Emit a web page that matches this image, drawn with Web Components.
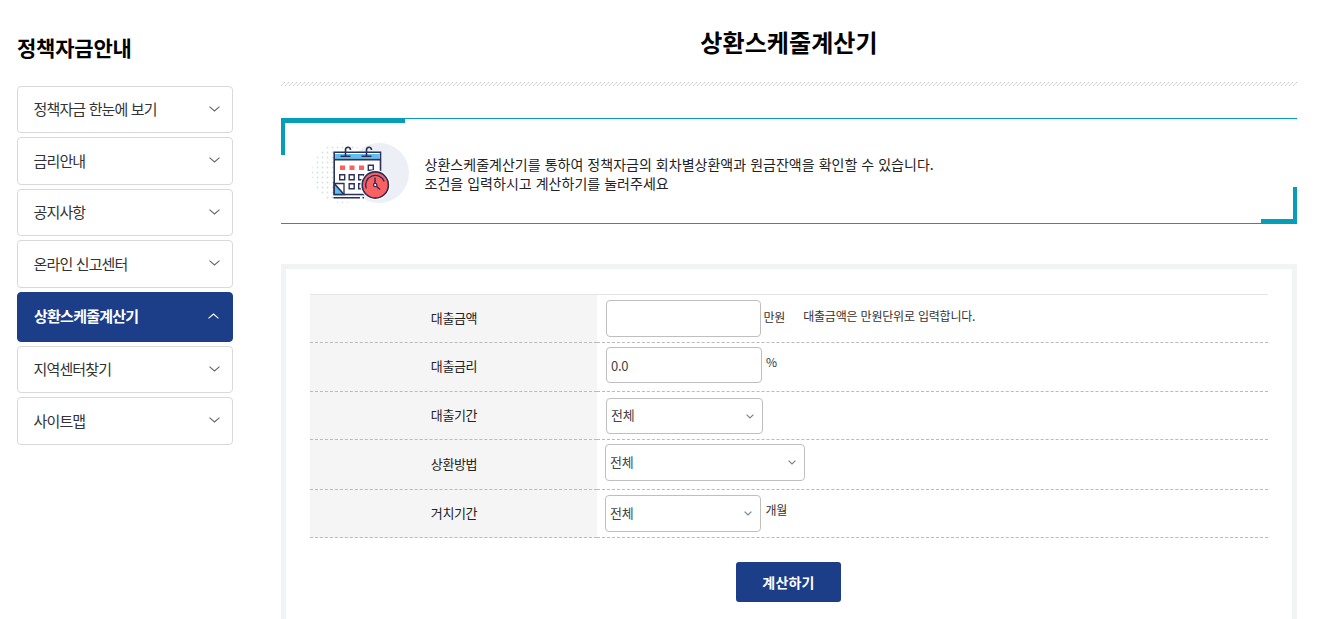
<!DOCTYPE html>
<html lang="ko">
<head>
<meta charset="utf-8">
<title>상환스케줄계산기</title>
<style>
    html, body { margin:0; height:619px; overflow:hidden; background:#fff }
    body { font-family:"Noto Sans CJK KR", sans-serif; color:#222 }
</style>
</head>
<body>
<loan-page>
    <side-menu slot="side" heading="정책자금안내">
        <side-item>정책자금 한눈에 보기</side-item>
        <side-item style="--h:48px">금리안내</side-item>
        <side-item>공지사항</side-item>
        <side-item style="--h:48px">온라인 신고센터</side-item>
        <side-item active style="--h:50px">상환스케줄계산기</side-item>
        <side-item>지역센터찾기</side-item>
        <side-item style="--h:48px">사이트맵</side-item>
    </side-menu>
    <page-title>상환스케줄계산기</page-title>
    <info-box>
        <calendar-icon slot="icon"></calendar-icon>
        <div>상환스케줄계산기를 통하여 정책자금의 회차별상환액과 원금잔액을 확인할 수 있습니다.</div>
        <div>조건을 입력하시고 계산하기를 눌러주세요</div>
    </info-box>
    <loan-form>
        <form-row label="대출금액" style="--h:48px; --pad:5px 0 0 9px">
            <form-field style="--w:155px; --fh:37px"></form-field>
            <form-note style="--m:8px 0 0 2.5px">만원</form-note>
            <form-note style="--m:7px 0 0 18px">대출금액은 만원단위로 입력합니다.</form-note>
        </form-row>
        <form-row label="대출금리" style="--h:49px; --pad:4px 0 0 9px">
            <form-field style="--w:156px; --fh:36px">0.0</form-field>
            <form-note style="--m:6px 0 0 4px">%</form-note>
        </form-row>
        <form-row label="대출기간" style="--h:48px; --pad:6px 0 0 9px">
            <form-field select style="--w:157px; --fh:36px">전체</form-field>
        </form-row>
        <form-row label="상환방법" style="--h:50px; --pad:4px 0 0 8px">
            <form-field select style="--w:200px; --fh:37px">전체</form-field>
        </form-row>
        <form-row label="거치기간" style="--h:48px; --pad:5px 0 0 8px">
            <form-field select style="--w:156px; --fh:37px">전체</form-field>
            <form-note style="--m:6px 0 0 4.5px">개월</form-note>
        </form-row>
        <submit-button slot="action">계산하기</submit-button>
    </loan-form>
</loan-page>
<script>
const define = (tag, html) => customElements.define(tag, class extends HTMLElement {
    constructor() {
        super();
        this.attachShadow({ mode: 'open' }).innerHTML = typeof html == 'function' ? html(this) : html;
    }
});

define('loan-page', `
    <style>
        :host{
            display:grid; grid-template-columns:216px 1016px; column-gap:48px;
            box-sizing:border-box; height:619px; padding-left:17px;
        }
        main{ display:flex; flex-direction:column }
    </style>
    <slot name="side"></slot>
    <main><slot></slot></main>`);

define('side-menu', el => `
    <style>
        :host{ display:block; padding-top:32px }
        h2{
            margin:0 0 24px; height:30px; line-height:30px;
            font-size:21px; font-weight:700; letter-spacing:-.2px; color:#000;
        }
        nav{ display:flex; flex-direction:column; gap:4px }
    </style>
    <h2>${el.getAttribute('heading')}</h2>
    <nav><slot></slot></nav>`);

define('side-item', `
    <style>
        :host{
            display:flex; align-items:center; justify-content:space-between;
            box-sizing:border-box; height:var(--h, 47px); padding:0 12px 2px 15.5px;
            border:1px solid #d9d9d9; border-radius:4px;
            font-size:15px; letter-spacing:-.85px; color:#333; cursor:pointer;
        }
        :host([active]){
            padding:0 13px 3px 16px; background:#1c3d87; border-color:#1c3d87;
            color:#fff; font-weight:700; letter-spacing:-.75px;
        }
        svg{ fill:none; stroke:#666; stroke-width:1.1 }
        :host([active]) svg{ stroke:#fff; transform:rotate(180deg) }
    </style>
    <span><slot></slot></span>
    <svg width="11" height="6" viewBox="0 0 11 6"><path d="M.5 .7 5.5 5 10.5 .7"/></svg>`);

define('page-title', `
    <style>
        :host{ display:block; padding-top:24px }
        h1{
            margin:0 0 22px; height:36px; line-height:36px; text-align:center;
            font-size:24px; font-weight:700; letter-spacing:.1px; color:#000;
        }
        svg{ display:block }
    </style>
    <h1><slot></slot></h1>
    <svg width="1016" height="4" shape-rendering="crispEdges">
        <pattern id="hatch" width="4" height="4" patternUnits="userSpaceOnUse">
            <path fill="#c8c8c8" d="M3 0h1v1h-1zM0 3h1v1h-1z"/>
            <path fill="#dcdcdc" d="M2 1h1v1h-1zM1 2h1v1h-1z"/>
        </pattern>
        <rect width="1016" height="4" fill="url(#hatch)"/>
    </svg>`);

define('info-box', `
    <style>
        :host{
            display:flex; position:relative; box-sizing:border-box; height:106px; margin-top:32px;
            padding:21px 0 0 29px; gap:14.5px;
            border:solid #069db8; border-width:1px 0;
        }
        .text{ padding-top:15px; font-size:14px; line-height:19px; letter-spacing:.03px; color:#222 }
        /* thick corner brackets over the thin border */
        i{ position:absolute; box-sizing:border-box; border:solid #069db8 }
        .tl{ left:0; top:-1px; width:124px; height:37px; border-width:5px 0 0 0 }
        .tl2{ left:0; top:-1px; width:4px; height:37px; border-width:0 0 0 4px }
        .br{ right:0; bottom:-1px; width:36px; height:5px; border-width:0 0 5px 0 }
        .br2{ right:0; bottom:-1px; width:4px; height:37px; border-width:0 4px 0 0 }
    </style>
    <i class="tl"></i><i class="tl2"></i><i class="br"></i><i class="br2"></i>
    <slot name="icon"></slot>
    <div class="text"><slot></slot></div>`);

define('calendar-icon', `
    <style>
        :host{ display:block; width:100px; height:66px }
        svg{ display:block }
    </style>
    <svg width="100" height="66" viewBox="0 0 100 66" fill="none" stroke="#2b3159" stroke-width="1.6">
        <pattern id="dots" width="5" height="5" patternUnits="userSpaceOnUse">
            <circle cx="2.5" cy="2.5" r=".9" fill="#d3e0e4" stroke="none"/>
        </pattern>
        <circle cx="32" cy="33" r="30" fill="url(#dots)" stroke="none"/>
        <circle cx="69" cy="33" r="30" fill="#eceff5" stroke="none"/>
        <path fill="#fff" d="M24.2 12.2H70.5V54.5H24.2z"/>
        <path fill="#5bc1f5" stroke="none" d="M25.1 14H69.6V18.8H25.1z"/>
        <path d="M24 19.6H70.5"/>
        <path d="M30.5 16.2H40.5M35.5 16V10Q35.5 7.2 38 7.2 40.5 7.2 40.5 10M51.5 16.2H61.5M56.5 16V10Q56.5 7.2 59 7.2 61.5 7.2 61.5 10"/>
        <path fill="#fb6163" stroke="none" d="M30 25.5h5v4.5h-5zM39.5 25.5h5v4.5h-5zM49 25.5h5v4.5h-5z"/>
        <path stroke-width="1.4" d="M58.3 25.3h5v5h-5zM29.7 34.7h5v5h-5zM39.2 34.7h5v5h-5zM48.7 34.7h5v5h-5zM39.2 43.8h5v5h-5zM48.7 43.8h5v5h-5z"/>
        <path fill="#5bc1f5" d="M24.2 43.5 34 54.5H24.2z"/>
        <path stroke-width="1.3" d="M24.5 43.5H34V54.5"/>
        <path stroke-width="1.4" d="M23.5 57.8H50M52.5 57.8H54"/>
        <circle cx="65.3" cy="45" r="15" fill="#fff" stroke="none"/>
        <circle cx="65.3" cy="45" r="13.1" fill="#fb6163"/>
        <path stroke-width="1.4" d="M56.3 48.5A9.6 9.6 0 0 1 74.2 41.5"/>
        <path stroke-width="1.5" d="M65 37.5V43M66.6 46.5 70 49.5"/>
        <circle cx="65.2" cy="45" r="1.7" fill="#fff" stroke-width="1.3"/>
    </svg>`);

define('loan-form', `
    <style>
        :host{
            display:block; box-sizing:border-box; height:355px; margin-top:40px; padding:25px 24px 0;
            border:solid #f1f3f5; border-width:5px 5px 0;
        }
        .rows{ border-top:1px solid #e5e5e5 }
        .action{ display:flex; justify-content:center; padding:24px 1px 0 0 }
    </style>
    <div class="rows"><slot></slot></div>
    <div class="action"><slot name="action"></slot></div>`);

define('form-row', el => `
    <style>
        :host{ display:grid; grid-template-columns:287px 1fr; height:var(--h) }
        div{ display:flex; box-sizing:border-box; border-bottom:1px dashed #bbb }
        .label{
            align-items:center; justify-content:center; padding:0 0 3px 1px; background:#f5f5f5;
            font-size:13px; letter-spacing:-.35px; color:#222;
        }
        .cell{ align-items:flex-start; padding:var(--pad) }
    </style>
    <div class="label">${el.getAttribute('label')}</div>
    <div class="cell"><slot></slot></div>`);

define('form-field', `
    <style>
        :host{
            display:flex; align-items:center; justify-content:space-between; flex:none;
            box-sizing:border-box; width:var(--w); height:var(--fh); padding:0 8px 0 4px;
            border:1px solid #bfbfbf; border-radius:4px; background:#fff;
            font-size:13px; letter-spacing:-.3px; color:#444;
        }
        :host([select]) span{ padding-bottom:3px }
        svg{ display:none; fill:none; stroke:#7b8290; stroke-width:1.2 }
        :host([select]) svg{ display:block }
    </style>
    <span><slot></slot></span>
    <svg width="8" height="5" viewBox="0 0 8 5"><path d="M.6 .6 4 4 7.4 .6"/></svg>`);

define('form-note', `
    <style>
        :host{
            display:block; margin:var(--m); line-height:18px; white-space:nowrap;
            font-size:12px; letter-spacing:-.2px; color:#333;
        }
    </style>
    <slot></slot>`);

define('submit-button', `
    <style>
        :host{ display:block }
        button{
            display:block; width:105px; height:40px; padding:0 0 1px; border:0; border-radius:3px;
            background:#1c3d87; color:#fff; cursor:pointer;
            font:700 14px "Noto Sans CJK KR", sans-serif; letter-spacing:.2px;
        }
    </style>
    <button><slot></slot></button>`);
</script>
</body>
</html>
